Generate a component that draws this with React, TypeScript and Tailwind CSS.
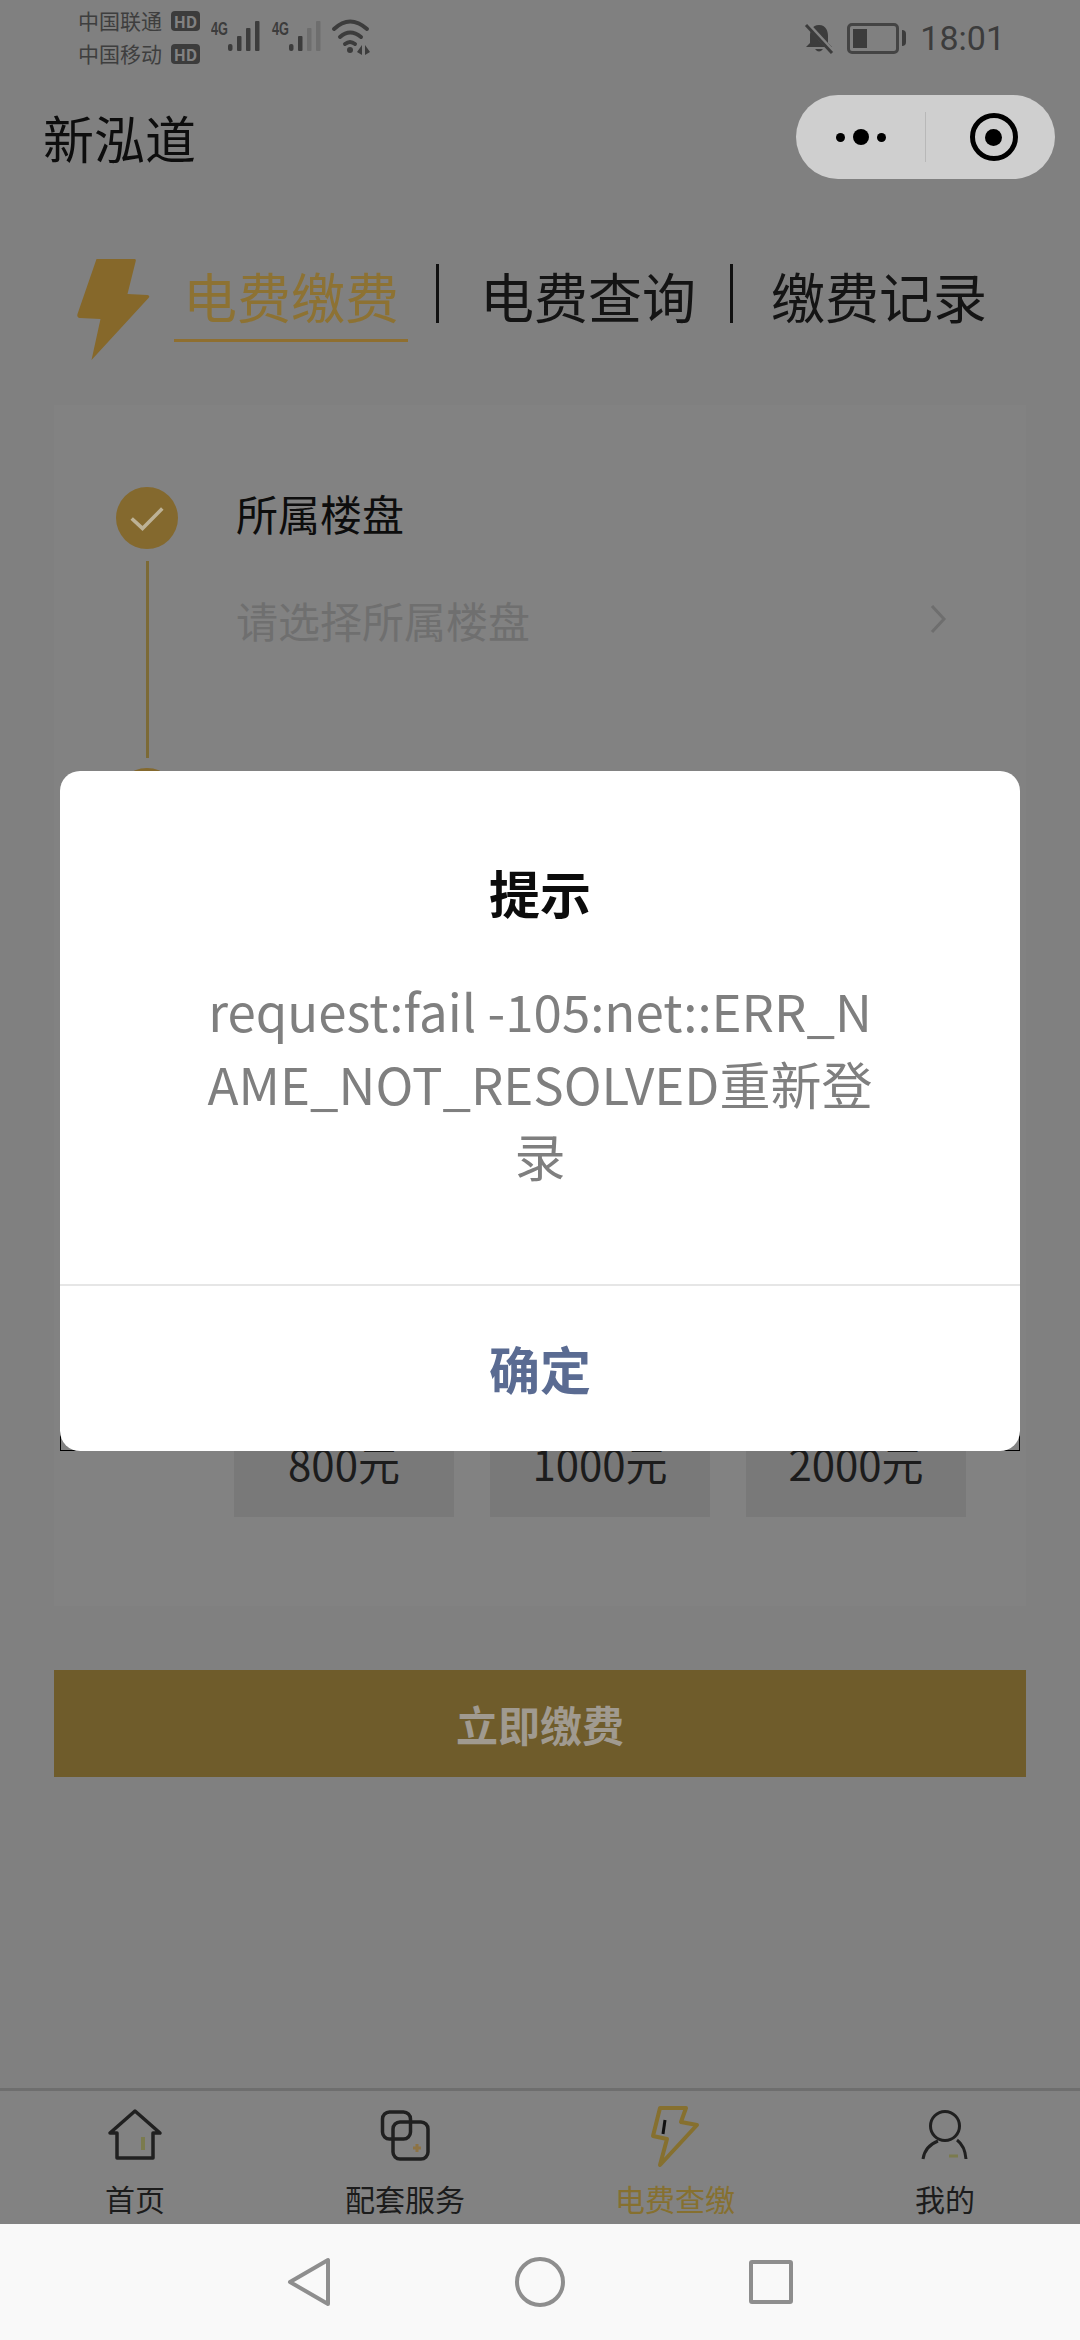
const cjk = "font-['Noto_Sans_CJK_SC','Noto_Sans',sans-serif]";

function Bolt({ className }: { className: string }) {
  return (
    <svg viewBox="0 0 74 103" className={className}>
      <path d="M20 1 L58 1 Q60 1 59 4 L51 36 L71 37 Q74 38 72 40 L15 102 L24 61 L3 60 Q0 59 1 56 Z" fill="#86682a" />
    </svg>
  );
}

function StatusBar() {
  return (
    <div className="flex h-[64px] items-start justify-between pl-[78px] pr-[75px] pt-[4px]">
      <div className="flex items-start">
        <div className="flex w-[122px] flex-col text-[21px] leading-[33px] text-[#3e3e3e]">
          {["中国联通", "中国移动"].map((carrier) => (
            <div key={carrier} className="flex items-center gap-[9px]">
              <span className="whitespace-nowrap">{carrier}</span>
              <span className="w-[29px] rounded-[4px] bg-[#3c3c3c] text-center text-[16px] font-bold leading-[20px] text-[#828282]">HD</span>
            </div>
          ))}
        </div>
        <svg viewBox="0 0 160 50" className="ml-[11px] mt-[4px] h-[50px] w-[160px]">
          <g fill="#3c3c3c">
            <rect x="17" y="36" width="4.5" height="7" rx="2" />
            <rect x="26" y="28" width="4.5" height="15" rx="1" />
            <rect x="35" y="20" width="4.5" height="23" rx="1" />
            <rect x="44" y="13" width="4.5" height="30" rx="1" />
            <rect x="78" y="36" width="4.5" height="7" rx="2" />
            <rect x="87" y="28" width="4.5" height="15" rx="1" />
          </g>
          <g fill="#6e6e6e">
            <rect x="96" y="20" width="4.5" height="23" rx="1" />
            <rect x="105" y="13" width="4.5" height="30" rx="1" />
          </g>
          <text x="0" y="27" fontSize="19" fontWeight="700" fill="#3c3c3c" fontFamily="Liberation Sans" textLength={17} lengthAdjust="spacingAndGlyphs">4G</text>
          <text x="61" y="27" fontSize="19" fontWeight="700" fill="#3c3c3c" fontFamily="Liberation Sans" textLength={17} lengthAdjust="spacingAndGlyphs">4G</text>
          <g fill="none" stroke="#3c3c3c" strokeWidth="4" strokeLinecap="round">
            <path d="M123 21 Q139 6 156 21" />
            <path d="M129 29 Q139 20 150 29" />
            <path d="M134 36 Q139 32 144 36" />
          </g>
          <circle cx="139" cy="42" r="3" fill="#3c3c3c" />
          <path d="M151 37 L151 47 L146 44 Z M154 37 L154 47 L159 44 Z" fill="#3c3c3c" />
        </svg>
      </div>
      <div className="flex items-center">
        <svg viewBox="0 0 30 32" className="mr-[13px] mt-[16px] h-[32px] w-[30px]">
          <path d="M15 3 C8 3 6 9 6 14 L6 21 L2 25 L28 25 L24 21 L24 14 C24 9 22 3 15 3 Z" fill="#3c3c3c" />
          <path d="M11 27 Q15 32 19 27 Z" fill="#3c3c3c" />
          <path d="M3 2 L29 30" stroke="#828282" strokeWidth="5" />
          <path d="M2 3 L28 31" stroke="#3c3c3c" strokeWidth="3" />
        </svg>
        <div className="mt-[16px] flex h-[31px] w-[52px] items-stretch rounded-[5px] border-[3px] border-[#444] p-[3px]">
          <div className="w-[14px] bg-[#3c3c3c]" />
        </div>
        <div className="mt-[16px] ml-[3px] h-[16px] w-[4px] rounded-r bg-[#3c3c3c]" />
        <span className="ml-[14px] mt-[16px] font-['Roboto',sans-serif] text-[34px] leading-[36px] text-[#3c3c3c]">18:01</span>
      </div>
    </div>
  );
}

function Header() {
  return (
    <div className="flex h-[146px] items-center justify-between pl-[43px] pr-[25px]">
      <span className="text-[51px] leading-[56px] text-[#0d0d0d]">新泓道</span>
      <div className="flex h-[84px] w-[259px] items-center rounded-full bg-[#cfcfcf]">
        <div className="flex w-[129px] items-center justify-center gap-[8px]">
          <span className="h-[9px] w-[9px] rounded-full bg-black" />
          <span className="h-[16px] w-[16px] rounded-full bg-black" />
          <span className="h-[9px] w-[9px] rounded-full bg-black" />
        </div>
        <div className="h-[50px] w-px bg-[#b8b8b8]" />
        <div className="flex flex-1 items-center justify-center pl-[6px]">
          <div className="flex h-[48px] w-[48px] items-center justify-center rounded-full border-[5px] border-black">
            <span className="h-[17px] w-[17px] rounded-full bg-black" />
          </div>
        </div>
      </div>
    </div>
  );
}

function Tabs() {
  return (
    <div className="mt-[48px] flex h-[110px] items-start pl-[76px]">
      <Bolt className="h-[103px] w-[75px] shrink-0" />
      <div className="ml-[23px] mt-[8px] w-[234px] border-b-[3px] border-[#8f6f30] pb-[13px] text-center text-[54px] leading-[60px] text-[#8d7233]">电费缴费</div>
      <div className="ml-[28px] mt-[6px] h-[59px] w-[3px] bg-[#111]" />
      <div className="ml-[41px] mt-[8px] w-[216px] text-[54px] leading-[60px] text-[#141414]">电费查询</div>
      <div className="ml-[34px] mt-[6px] h-[59px] w-[3px] bg-[#111]" />
      <div className="ml-[38px] mt-[8px] text-[54px] leading-[60px] text-[#141414]">缴费记录</div>
    </div>
  );
}

function Form() {
  return (
    <div className="mx-[54px] mt-[37px] h-[1201px] bg-[#828282]">
      <div className="flex pl-[62px] pt-[78px]">
        <div className="mt-[4px] flex w-[62px] flex-col items-center">
          <div className="flex h-[62px] w-[62px] items-center justify-center rounded-full bg-[#84692e]">
            <svg viewBox="0 0 40 30" className="h-[27px] w-[36px]">
              <path d="M3 15 L15 26 L37 4" fill="none" stroke="#bdb296" strokeWidth="4" />
            </svg>
          </div>
          <div className="mt-[12px] h-[197px] w-[3px] bg-[#7c6a36]" />
          <div className="mt-[10px] h-[62px] w-[62px] rounded-full bg-[#84692e]" />
        </div>
        <div className="ml-[58px] flex-1 pr-[80px]">
          <div className="text-[42px] leading-[60px] text-[#0d0d0d]">所属楼盘</div>
          <div className="mt-[46px] flex h-[60px] items-center justify-between">
            <span className="text-[42px] text-[#6f6f6f]">请选择所属楼盘</span>
            <svg viewBox="0 0 16 30" className="h-[30px] w-[16px]">
              <path d="M2 2 L14 15 L2 28" fill="none" stroke="#6e6e6e" strokeWidth="3" />
            </svg>
          </div>
        </div>
      </div>
      <div className="ml-[180px] mt-[547px] flex gap-[36px]">
        {["800元", "1000元", "2000元"].map((amount) => (
          <div
            key={amount}
            className="flex h-[140px] w-[220px] items-start justify-center bg-[#797979] pt-[58px] text-[42px] leading-[56px] text-[#1c1c1c]"
          >
            {amount}
          </div>
        ))}
      </div>
    </div>
  );
}

function TabBar() {
  const stroke = "#202020";
  return (
    <div className="grid h-[136px] grid-cols-4 border-t-[3px] border-[#6e6e6e] bg-[#828282]">
      <div className="flex flex-col items-center">
        <svg viewBox="0 0 56 54" className="mt-[17px] h-[54px] w-[56px]">
          <path d="M28 3 L53 25 L46 25 L46 50 L10 50 L10 25 L3 25 Z" fill="none" stroke={stroke} strokeWidth="3.5" strokeLinejoin="round" />
          <rect x="34" y="29" width="4" height="13" fill="#7b7b4e" />
        </svg>
        <span className="mt-[18px] text-[30px] leading-[36px] text-[#1c1c1c]">首页</span>
      </div>
      <div className="flex flex-col items-center">
        <svg viewBox="0 0 52 54" className="mt-[17px] h-[54px] w-[52px]">
          <rect x="3.5" y="4" width="28" height="27" rx="7" fill="none" stroke={stroke} strokeWidth="3.5" />
          <rect x="14" y="14" width="35" height="37" rx="7" fill="none" stroke={stroke} strokeWidth="3.5" />
          <path d="M38 36 L38 44 M34 40 L42 40" stroke="#8d7344" strokeWidth="3" />
        </svg>
        <span className="mt-[18px] text-[30px] leading-[36px] text-[#1c1c1c]">配套服务</span>
      </div>
      <div className="flex flex-col items-center">
        <svg viewBox="0 0 50 64" className="mt-[14px] h-[64px] w-[50px]">
          <path d="M10 3 L36 3 L31 17 L47 20 L10 60 L17 34 L3 31 Z" fill="none" stroke="#86702f" strokeWidth="4" strokeLinejoin="round" />
          <path d="M15 15 L13 29" stroke="#111" strokeWidth="3" />
        </svg>
        <span className="mt-[11px] text-[30px] leading-[36px] text-[#86702f]">电费查缴</span>
      </div>
      <div className="flex flex-col items-center">
        <svg viewBox="0 0 48 54" className="mt-[17px] h-[54px] w-[48px]">
          <circle cx="24" cy="18" r="14.5" fill="none" stroke={stroke} strokeWidth="3" />
          <path d="M2 51 Q4 38 17 33 M36 32 Q44 38 45 51" fill="none" stroke={stroke} strokeWidth="3" />
          <path d="M28 48 L37 48" stroke="#7b7b4e" strokeWidth="3" />
        </svg>
        <span className="mt-[18px] text-[30px] leading-[36px] text-[#1c1c1c]">我的</span>
      </div>
    </div>
  );
}

function NavBar() {
  return (
    <div className="flex h-[116px] items-center justify-center gap-[184px] bg-[#f9f9f9]">
      <svg viewBox="0 0 44 50" className="h-[50px] w-[44px]">
        <path d="M41 3 L41 47 L3 25 Z" fill="none" stroke="#8e8e8e" strokeWidth="4" strokeLinejoin="round" />
      </svg>
      <div className="h-[50px] w-[50px] rounded-full border-[4px] border-[#8e8e8e]" />
      <div className="h-[44px] w-[44px] rounded-[3px] border-[4px] border-[#8e8e8e]" />
    </div>
  );
}

function Dialog() {
  return (
    <div className="absolute left-[60px] top-[771px] flex h-[680px] w-[960px] flex-col rounded-[20px] bg-white">
      <div className="mt-[91px] text-center text-[51px] font-bold leading-[60px] text-[#0c0c0c]">提示</div>
      <div className="mx-auto mt-[52px] w-[670px] break-all text-center text-[51px] leading-[72.5px] text-[#7f7f7f]">
        request:fail -105:net::ERR_NAME_NOT_RESOLVED重新登录
      </div>
      <div className="mt-auto flex h-[167px] items-center justify-center border-t-2 border-[#e6e6e6] text-[51px] font-bold text-[#5a6b92]">确定</div>
    </div>
  );
}

export default function App() {
  return (
    <div className={`relative flex h-[2340px] w-[1080px] flex-col overflow-hidden bg-[#808080] ${cjk}`}>
      <StatusBar />
      <Header />
      <Tabs />
      <Form />
      <div className="mx-[54px] mt-[64px] flex h-[107px] items-center justify-center bg-[#6f5c2b] text-[42px] font-bold text-[#a09a90]">立即缴费</div>
      <div className="flex-1" />
      <TabBar />
      <NavBar />
      {/* dark corners peeking out from behind the dialog */}
      <div className="absolute left-[60px] top-[1421px] h-[30px] w-[960px] border-x border-b border-black" />
      <Dialog />
    </div>
  );
}
